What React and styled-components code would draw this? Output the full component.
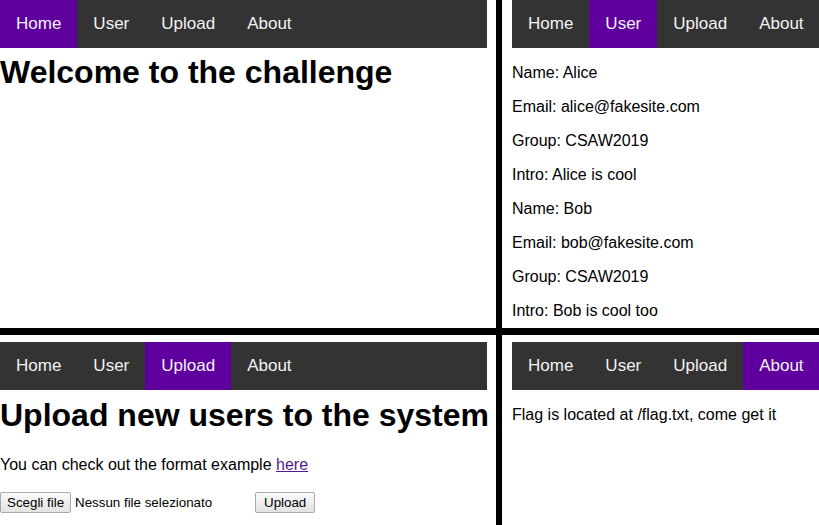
import React from 'react'
import styled, { createGlobalStyle } from 'styled-components'

const GlobalStyle = createGlobalStyle`
  html, body {
    margin: 0;
    padding: 0;
    background: #fff;
  }
  body {
    font-family: "Liberation Sans", Arial, sans-serif;
    overflow: hidden;
  }
`

const Screen = styled.div`
  display: grid;
  grid-template-columns: 496px 1fr;
  grid-template-rows: 328px 1fr;
  column-gap: 6px;
  row-gap: 7px;
  width: 819px;
  height: 525px;
  background: #000;
  overflow: hidden;
`

const Frame = styled.div`
  background: #fff;
  overflow: hidden;
  padding-right: ${({ $side }) => ($side === 'left' ? '9px' : '0')};
  padding-left: ${({ $side }) => ($side === 'right' ? '10px' : '0')};
  padding-top: ${({ $row }) => ($row === 'bottom' ? '7px' : '0')};
  color: #000;
`

const Nav = styled.div`
  display: flex;
  background: #333;
  white-space: nowrap;
`

const NavLink = styled.a`
  flex-shrink: 0;
  display: block;
  padding: 14px 16px;
  font-size: 17px;
  line-height: 20px;
  color: #f2f2f2;
  text-decoration: none;
  background: ${({ $active }) => ($active ? '#5f009e' : 'transparent')};
`

const Heading = styled.h1`
  font-size: 32px;
  font-weight: bold;
  margin: ${({ $top }) => $top}px 0 22px;
  white-space: nowrap;
`

const Text = styled.p`
  font-size: 16px;
  line-height: 18px;
  margin: 16px 0;
  white-space: nowrap;
`

const Link = styled.a`
  color: #551a8b;
  text-decoration: underline;
`

const Form = styled.form`
  display: flex;
  align-items: center;
  margin-top: 18px;
`

const FilePicker = styled.div`
  display: flex;
  align-items: center;
  gap: 4px;
  width: 255px;
  font-size: 13.33px;
`

const Button = styled.button`
  font-family: "Liberation Sans", Arial, sans-serif;
  font-size: 13.33px;
  line-height: 16px;
  height: 21px;
  padding: 1px ${({ $pad }) => $pad}px;
  color: #000;
  background: linear-gradient(#fafafa, #e3e3e3);
  border: 1px solid #a9a9a9;
  border-radius: 2px;
`

const items = ['Home', 'User', 'Upload', 'About']

const Menu = ({ active }) => (
  <Nav>
    {items.map((it) => (
      <NavLink key={it} $active={it === active}>{it}</NavLink>
    ))}
  </Nav>
)

const users = [
  { name: 'Alice', email: 'alice@fakesite.com', group: 'CSAW2019', intro: 'Alice is cool' },
  { name: 'Bob', email: 'bob@fakesite.com', group: 'CSAW2019', intro: 'Bob is cool too' },
]

export default function App() {
  return (
    <>
      <GlobalStyle />
      <Screen>
        <Frame $side="left" $row="top">
          <Menu active="Home" />
          <Heading $top={6}>Welcome to the challenge</Heading>
        </Frame>
        <Frame $side="right" $row="top">
          <Menu active="User" />
          {users.map((u) => (
            <React.Fragment key={u.name}>
              <Text>Name: {u.name}</Text>
              <Text>Email: {u.email}</Text>
              <Text>Group: {u.group}</Text>
              <Text>Intro: {u.intro}</Text>
            </React.Fragment>
          ))}
        </Frame>
        <Frame $side="left" $row="bottom">
          <Menu active="Upload" />
          <Heading $top={7}>Upload new users to the system</Heading>
          <Text>You can check out the format example <Link href="#">here</Link></Text>
          <Form onSubmit={(e) => e.preventDefault()}>
            <FilePicker>
              <Button type="button" $pad={6}>Scegli file</Button>
              <span>Nessun file selezionato</span>
            </FilePicker>
            <Button type="submit" $pad={8}>Upload</Button>
          </Form>
        </Frame>
        <Frame $side="right" $row="bottom">
          <Menu active="About" />
          <Text>Flag is located at /flag.txt, come get it</Text>
        </Frame>
      </Screen>
    </>
  )
}
